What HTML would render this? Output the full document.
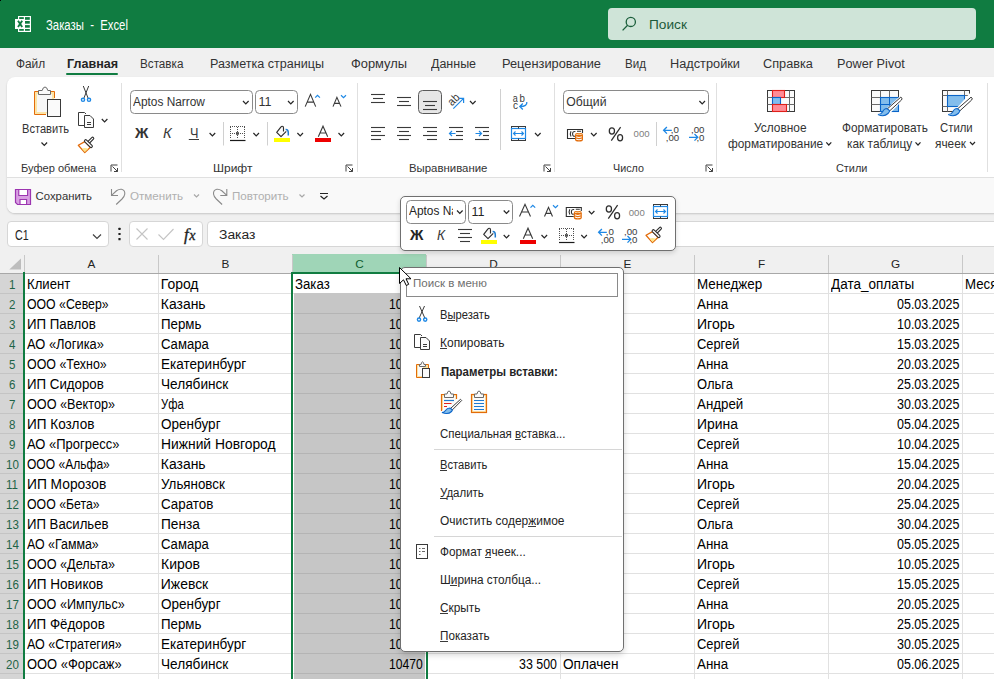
<!DOCTYPE html><html><head><meta charset="utf-8"><style>
*{box-sizing:border-box}
html,body{margin:0;padding:0;width:994px;height:679px;overflow:hidden;background:#f0f0f0;font-family:"Liberation Sans",sans-serif;position:relative}
.t{position:absolute;white-space:pre;line-height:1;transform-origin:0 0}
.a{position:absolute}
svg{position:absolute;overflow:visible}
</style></head><body>
<div class="a" style="left:0;top:0;width:994px;height:48px;background:#107c41"></div><div class="a" style="left:0;top:0;width:1px;height:1px;background:#000"></div><div class="a" style="left:608px;top:8px;width:368px;height:32px;border-radius:4px;background:#cfe4d8"></div><div class="t" style="left:46.00px;top:19px;font-size:13.81px;color:#fff;transform:scaleX(0.821);">Заказы  -  Excel</div>
<div class="t" style="left:649.00px;top:19px;font-size:12.79px;color:#1d5a3a;transform:scaleX(1.069);">Поиск</div>
<div class="t" style="left:15.60px;top:57px;font-size:13.08px;color:#333333;transform:scaleX(0.907);">Файл</div>
<div class="t" style="left:66.60px;top:57px;font-size:13.08px;color:#242424;font-weight:700;transform:scaleX(0.960);">Главная</div>
<div class="t" style="left:139.70px;top:57px;font-size:13.08px;color:#333333;transform:scaleX(0.894);">Вставка</div>
<div class="t" style="left:210.00px;top:57px;font-size:13.08px;color:#333333;transform:scaleX(0.961);">Разметка страницы</div>
<div class="t" style="left:351.00px;top:57px;font-size:13.08px;color:#333333;transform:scaleX(0.984);">Формулы</div>
<div class="t" style="left:431.00px;top:57px;font-size:13.08px;color:#333333;transform:scaleX(0.953);">Данные</div>
<div class="t" style="left:502.00px;top:57px;font-size:13.08px;color:#333333;transform:scaleX(0.980);">Рецензирование</div>
<div class="t" style="left:625.00px;top:57px;font-size:13.08px;color:#333333;transform:scaleX(0.887);">Вид</div>
<div class="t" style="left:670.00px;top:57px;font-size:13.08px;color:#333333;transform:scaleX(0.975);">Надстройки</div>
<div class="t" style="left:763.00px;top:57px;font-size:13.08px;color:#333333;transform:scaleX(0.973);">Справка</div>
<div class="t" style="left:837.00px;top:57px;font-size:13.08px;color:#333333;transform:scaleX(0.973);">Power Pivot</div>
<div class="a" style="left:66px;top:73px;width:52px;height:2px;background:#107c41;border-radius:1px"></div><div class="a" style="left:7px;top:77px;width:995px;height:136px;border-radius:8px;background:#fff;box-shadow:0 1px 2px rgba(0,0,0,.18)"></div><div class="a" style="left:7px;top:177px;width:995px;height:36px;border-radius:0 0 8px 8px;background:#f9f9f9;border-top:1px solid #e0e0e0"></div><svg width="994" height="679" style="left:0;top:0"><rect x="18" y="16" width="13" height="16" fill="#fff"/><g fill="#107c41"><rect x="19.2" y="17.1" width="4.6" height="1.9"/><rect x="25" y="17.1" width="4.8" height="2.7"/><rect x="25" y="21" width="4.8" height="2.7"/><rect x="25" y="25.1" width="4.8" height="2.6"/><rect x="25" y="29" width="4.8" height="1.8"/><rect x="19.2" y="29" width="4.6" height="1.8"/></g><rect x="15" y="19" width="9.7" height="10" fill="#fff"/><path d="M18 20.8L22.2 27M22.2 20.8L18 27" stroke="#107c41" stroke-width="1.9"/><g fill="none" stroke="#1b5e3b" stroke-width="1.3"><circle cx="630.8" cy="21.9" r="4.6"/><path d="M627.6 25.2L622.6 30.4"/></g><path d="M46 114.5H34.5V91.5H54.5V98" fill="#fce4a6" stroke="#e36c0a"/><rect x="37" y="94" width="15" height="18" fill="#f7f7f7"/><path d="M38.5 90.5H42.2Q43 87 45 87Q47 87 47.8 90.5H50.5V94.5H38.5Z" fill="#fafafa" stroke="#6a6a6a"/><rect x="47.5" y="99.5" width="13" height="17" fill="#fafafa" stroke="#3a3a3a"/><path d="M41.5 142.5L44.3 145.4L47.1 142.5" fill="none" stroke="#262626" stroke-width="1.2"/><path d="M83.3 86L88.2 98.4M88.7 86L83.8 98.4" stroke="#3a3a3a" stroke-width="1"/><g fill="#fff" stroke="#1e88e5" stroke-width="1.4"><circle cx="83" cy="99.8" r="1.6"/><circle cx="89" cy="99.8" r="1.6"/></g><path d="M84.5 125.5H78.5V112.5H84.5L86 114" fill="none" stroke="#3a3a3a"/><path d="M84.5 115.5H90L93.5 119V127.5H84.5Z" fill="#fafafa" stroke="#3a3a3a"/><path d="M87 122.5H91M87 124.5H91" stroke="#3a3a3a"/><path d="M101.8 119L104.6 121.9L107.39999999999999 119" fill="none" stroke="#262626" stroke-width="1.2"/><g transform="translate(0 0)"><path d="M84.8 141.6L78.3 145.3L84.8 152.6L90.4 147.2Z" fill="#fff" stroke="#e36c0a" stroke-width="1.3" stroke-linejoin="round"/><path d="M81.8 148.6L84.8 152L88.2 148.8Q85 147.5 81.8 148.6Z" fill="#fde68a"/><path d="M92.6 138.4L88.8 142.2" stroke="#2e2e2e" stroke-width="3.4" stroke-linecap="round"/><path d="M92.6 138.4L88.8 142.2" stroke="#fff" stroke-width="1.2" stroke-linecap="round"/><path d="M85.7 140.9L91.1 146.3" stroke="#2e2e2e" stroke-width="3.6" stroke-linecap="round"/><path d="M85.7 140.9L91.1 146.3" stroke="#fff" stroke-width="1.4" stroke-linecap="round"/></g><path d="M111.0 171.5V165.0H117.5M112.5 166.5L117.5 171.5M117.5 168.0V171.5H114.0" fill="none" stroke="#424242" stroke-width="1"/><path d="M346.0 171.5V165.0H352.5M347.5 166.5L352.5 171.5M352.5 168.0V171.5H349.0" fill="none" stroke="#424242" stroke-width="1"/><path d="M544.0 171.5V165.0H550.5M545.5 166.5L550.5 171.5M550.5 168.0V171.5H547.0" fill="none" stroke="#424242" stroke-width="1"/><path d="M706.0 171.5V165.0H712.5M707.5 166.5L712.5 171.5M712.5 168.0V171.5H709.0" fill="none" stroke="#424242" stroke-width="1"/><path d="M121.5 83V172" stroke="#e0e0e0"/><path d="M357.5 83V172" stroke="#e0e0e0"/><path d="M554.5 83V172" stroke="#e0e0e0"/><path d="M716.5 83V172" stroke="#e0e0e0"/><path d="M987.5 83V172" stroke="#e0e0e0"/><rect x="130.5" y="90.5" width="122" height="23" rx="4" fill="#fff" stroke="#8a8a8a"/><rect x="255.5" y="90.5" width="42" height="23" rx="4" fill="#fff" stroke="#8a8a8a"/><path d="M243 101L245.8 103.9L248.6 101" fill="none" stroke="#262626" stroke-width="1.2"/><path d="M288 101L290.8 103.9L293.6 101" fill="none" stroke="#262626" stroke-width="1.2"/><path d="M305.2 106.6L310.5 94.3L315.7 106.6M307.4 102.1H313.6" fill="none" stroke="#3a3a3a" stroke-width="1.1"/><path d="M315.2 97.7L317.5 95.3L319.9 97.7" fill="none" stroke="#1e88e5" stroke-width="1.2"/><path d="M333 106.6L336.9 97.4L341 106.6M334.6 103.4H339.3" fill="none" stroke="#3a3a3a" stroke-width="1.1"/><path d="M341 95.3L343.5 97.6L346 95.3" fill="none" stroke="#1e88e5" stroke-width="1.2"/><path d="M188.8 139.5H199" stroke="#3a3a3a"/><path d="M209.6 133L212.4 135.9L215.2 133" fill="none" stroke="#262626" stroke-width="1.2"/><path d="M223.5 122V145.5M267.5 122V145.5" stroke="#d0d0d0"/><g transform="translate(0 0)"><g stroke="#505050" stroke-dasharray="1 1" fill="none" shape-rendering="crispEdges"><path d="M230 126.5H246M230 133.5H246M230.5 127V139M237.5 127V139M244.5 127V139"/></g><rect x="236.5" y="132.5" width="2" height="2" fill="none" stroke="#505050" stroke-width=".8"/><path d="M230 140.5H245.5" stroke="#1a1a1a" stroke-width="1.2"/></g><path d="M253.4 133L256.2 135.9L259.0 133" fill="none" stroke="#262626" stroke-width="1.2"/><g transform="translate(0 0)"><path d="M283.5 131.5V127.8Q283.5 126.2 282.3 126.2Q281.5 126.2 280.6 127.3L276.7 132.4L281 136.6L286.3 131.4" fill="#fafafa" stroke="#2e2e2e" stroke-width="1.15" stroke-linejoin="round"/><path d="M285.6 129.5Q288.3 129.3 288.3 133V135.6" fill="none" stroke="#1e7bd0" stroke-width="1.5"/><rect x="274" y="138" width="16" height="4" fill="#ffff00"/></g><path d="M297.4 133L300.2 135.9L303.0 133" fill="none" stroke="#262626" stroke-width="1.2"/><path d="M318.3 136.8L323 126.2L327.7 136.8M320 133H326" fill="none" stroke="#3a3a3a" stroke-width="1.1"/><rect x="315" y="138" width="16" height="4" fill="#ee0000"/><path d="M338.5 133L341.3 135.9L344.1 133" fill="none" stroke="#262626" stroke-width="1.2"/><path d="M371 94.5H385" stroke="#3a3a3a" stroke-width="1.1"/><path d="M373 98.5H383" stroke="#3a3a3a" stroke-width="1.1"/><path d="M371 102.5H385" stroke="#3a3a3a" stroke-width="1.1"/><path d="M397 97.5H411" stroke="#3a3a3a" stroke-width="1.1"/><path d="M399 101.5H409" stroke="#3a3a3a" stroke-width="1.1"/><path d="M397 105.5H411" stroke="#3a3a3a" stroke-width="1.1"/><rect x="418.5" y="90.5" width="23" height="23" rx="4" fill="#e6e6e6" stroke="#5a5a5a"/><path d="M423 101.5H437" stroke="#3a3a3a" stroke-width="1.1"/><path d="M425 105.5H435" stroke="#3a3a3a" stroke-width="1.1"/><path d="M423 109.5H437" stroke="#3a3a3a" stroke-width="1.1"/><path d="M371 127.5H385" stroke="#3a3a3a" stroke-width="1.1"/><path d="M371 131.5H381" stroke="#3a3a3a" stroke-width="1.1"/><path d="M371 135.5H385" stroke="#3a3a3a" stroke-width="1.1"/><path d="M371 139.5H381" stroke="#3a3a3a" stroke-width="1.1"/><path d="M397 127.5H411" stroke="#3a3a3a" stroke-width="1.1"/><path d="M399 131.5H409" stroke="#3a3a3a" stroke-width="1.1"/><path d="M397 135.5H411" stroke="#3a3a3a" stroke-width="1.1"/><path d="M399 139.5H409" stroke="#3a3a3a" stroke-width="1.1"/><path d="M423 127.5H437" stroke="#3a3a3a" stroke-width="1.1"/><path d="M427 131.5H437" stroke="#3a3a3a" stroke-width="1.1"/><path d="M423 135.5H437" stroke="#3a3a3a" stroke-width="1.1"/><path d="M427 139.5H437" stroke="#3a3a3a" stroke-width="1.1"/><path d="M449 127.5H463" stroke="#3a3a3a" stroke-width="1.1"/><path d="M456 131.5H463" stroke="#3a3a3a" stroke-width="1.1"/><path d="M456 135.5H463" stroke="#3a3a3a" stroke-width="1.1"/><path d="M449 139.5H463" stroke="#3a3a3a" stroke-width="1.1"/><path d="M455.5 133.5H449.5M452 131L449.5 133.5L452 136" fill="none" stroke="#1e88e5" stroke-width="1.2"/><path d="M475 127.5H489" stroke="#3a3a3a" stroke-width="1.1"/><path d="M483 131.5H489" stroke="#3a3a3a" stroke-width="1.1"/><path d="M483 135.5H489" stroke="#3a3a3a" stroke-width="1.1"/><path d="M475 139.5H489" stroke="#3a3a3a" stroke-width="1.1"/><path d="M475.5 133.5H481.5M479 131L481.5 133.5L479 136" fill="none" stroke="#1e88e5" stroke-width="1.2"/><text x="0" y="0" transform="translate(452 106.5) rotate(-45)" font-family="Liberation Sans" font-size="11.5" fill="#3a3a3a" textLength="12" lengthAdjust="spacingAndGlyphs">ab</text><path d="M453.3 108.6L463.6 98.3M459 98.3H463.6V103" fill="none" stroke="#1e88e5" stroke-width="1.2"/><path d="M470 101L472.8 103.9L475.6 101" fill="none" stroke="#262626" stroke-width="1.2"/><path d="M500.5 89V150" stroke="#d0d0d0"/><g font-family="Liberation Sans" font-size="11" fill="#3a3a3a"><text x="512.8" y="101.7" textLength="5" lengthAdjust="spacingAndGlyphs">a</text><text x="519.6" y="101.7" textLength="5.4" lengthAdjust="spacingAndGlyphs">b</text><text x="513" y="108.7" textLength="5" lengthAdjust="spacingAndGlyphs">c</text></g><path d="M526.8 102Q527.5 106.5 520 106.5M522.8 103.5L519.8 106.5L522.8 109.5" fill="none" stroke="#1e88e5" stroke-width="1.3"/><rect x="511.5" y="126.5" width="14" height="14" fill="#fff" stroke="#3a3a3a"/><rect x="511.5" y="128.5" width="14" height="10" fill="#fff" stroke="#1e88e5" stroke-width="1.2"/><path d="M518.5 126.5V128.5M518.5 138.5V140.5" stroke="#3a3a3a"/><path d="M513.5 133.5H523.5M515.5 131.5L513.5 133.5L515.5 135.5M521.5 131.5L523.5 133.5L521.5 135.5" fill="none" stroke="#1e88e5" stroke-width="1.1"/><path d="M535 133L537.8 135.9L540.6 133" fill="none" stroke="#262626" stroke-width="1.2"/><rect x="563.5" y="90.5" width="145" height="23" rx="4" fill="#fff" stroke="#8a8a8a"/><path d="M699.4 101L702.1999999999999 103.9L705.0 101" fill="none" stroke="#262626" stroke-width="1.2"/><g transform="translate(0 0)"><path d="M575 138.5H567.5V129.5H582.5V133" fill="none" stroke="#2e2e2e" stroke-width="1.1"/><path d="M571 131.2Q569.6 133.8 571 136.6M575.4 131.5Q572.6 131.2 572.6 133.9Q572.6 136.5 575 136.3M577 131.3H581" fill="none" stroke="#2e2e2e" stroke-width="1.1"/><rect x="575" y="133" width="8" height="8.4" rx="2.2" fill="#e36c0a"/><path d="M576.3 134.6Q579 133.7 581.7 134.6" stroke="#fde0b0" stroke-width="1" fill="none"/><path d="M576.2 136.8Q579 138.2 581.8 136.8M576.2 139.1Q579 140.5 581.8 139.1" fill="none" stroke="#fff" stroke-width="1.1"/></g><path d="M591 133L593.8 135.9L596.6 133" fill="none" stroke="#262626" stroke-width="1.2"/><g transform="translate(0 0)" fill="none" stroke="#2e2e2e" stroke-width="1.25"><ellipse cx="611.9" cy="130.9" rx="2.6" ry="3.1"/><ellipse cx="620.1" cy="137.7" rx="2.5" ry="3.1"/><path d="M620.6 127.2L611.3 140.7"/></g><text x="633.6" y="137" font-family="Liberation Sans" font-size="9" fill="#808080" textLength="16" lengthAdjust="spacingAndGlyphs">000</text><path d="M656.5 122V146" stroke="#d0d0d0"/><path d="M671.8 130.3H663.6M666.9 127L663.6 130.3L666.9 133.6" fill="none" stroke="#1e88e5" stroke-width="1.3"/><g font-family="Liberation Sans" font-size="9.7" fill="#3a3a3a"><text x="670.7" y="132.7">,0</text><text x="665.7" y="141">,00</text><text x="691" y="132.7">,00</text><text x="696.4" y="141">,0</text></g><path d="M689 137.3H697.8M694.5 134L697.8 137.3L694.5 140.6" fill="none" stroke="#1e88e5" stroke-width="1.3"/><g stroke="#3a3a3a" fill="#fafafa"><rect x="767.5" y="90.5" width="27" height="21"/></g><path d="M767.5 97.5H794.5M767.5 104.5H794.5M772.5 90.5V111.5M789.5 90.5V111.5" stroke="#6a6a6a"/><rect x="772.5" y="90.5" width="12" height="7" fill="#ff8c96" stroke="#e0201a" stroke-width="1.1"/><rect x="772.5" y="97.5" width="8" height="7" fill="#80bdef" stroke="#0a64c8" stroke-width="1.1"/><rect x="772.5" y="104.5" width="14" height="7" fill="#ff8c96" stroke="#e0201a" stroke-width="1.1"/><path d="M826.3 142.3L828.8 145.0L831.3 142.3" fill="none" stroke="#262626" stroke-width="1.2"/><rect x="871.5" y="90.5" width="27" height="21" fill="#fafafa" stroke="#3a3a3a"/><path d="M871.5 97.5H898.5M871.5 104.5H898.5M880.5 90.5V111.5M889.5 90.5V111.5" stroke="#6a6a6a"/><rect x="880.5" y="97.5" width="18" height="14" fill="#83bdec" stroke="#0a64c8" stroke-width="1.1"/><path d="M889.5 97.5V111.5M880.5 104.5H898.5" stroke="#0a64c8"/><path d="M900.8 97.2L887.5 109.5L890 111.5L902 99Z" fill="#fff" stroke="#fff" stroke-width="2.5"/><path d="M900.8 97.2Q903 98 901.5 100L889.5 111L887.2 109Z" fill="#fff" stroke="#3a3a3a" stroke-width="1"/><path d="M887 108.5Q884 108.5 882.5 112Q881 114.5 878 114.5Q884 117.5 888 113.5Q890 111.5 889.5 110.5Z" fill="#83bdec" stroke="#0a64c8" stroke-width="1.1"/><path d="M915.5 142.3L918.0 145.0L920.5 142.3" fill="none" stroke="#262626" stroke-width="1.2"/><rect x="942.5" y="90.5" width="27" height="21" fill="#fafafa" stroke="#3a3a3a"/><path d="M942.5 95.5H969.5M942.5 106.5H969.5M947.5 90.5V111.5M964.5 90.5V111.5" stroke="#6a6a6a"/><rect x="947.5" y="95.5" width="17" height="11" fill="#83bdec" stroke="#0a64c8" stroke-width="1.1"/><path d="M970 93L976 93L976 118L951.5 118L951.5 113L960 104.5Z" fill="#fff"/><path d="M971 97.2L957.5 109.5L960 111.5L972.2 99Z" fill="#fff" stroke="#fff" stroke-width="2.5"/><path d="M971 97.2Q973.2 98 971.7 100L959.7 111L957.4 109Z" fill="#fff" stroke="#3a3a3a" stroke-width="1"/><path d="M957.2 108.5Q954.2 108.5 952.7 112Q951.2 114.5 948.2 114.5Q954.2 117.5 958.2 113.5Q960.2 111.5 959.7 110.5Z" fill="#83bdec" stroke="#0a64c8" stroke-width="1.1"/><path d="M970 142L972.5 144.7L975 142" fill="none" stroke="#262626" stroke-width="1.2"/><path d="M15.5 189.5H30.5V204.5H17.5L15.5 202.5Z" fill="#d89fe2" stroke="#9c35b0" stroke-width="1.2"/><rect x="19" y="190" width="8.4" height="5.2" fill="#fff"/><path d="M18.8 190V195.5H27.6V190" fill="none" stroke="#9c35b0" stroke-width="1.1"/><rect x="20.2" y="200" width="6.2" height="4" fill="#fff"/><path d="M20 204.5V199.5H26.6V204.5" fill="none" stroke="#9c35b0" stroke-width="1.1"/><path d="M111.5 189V195.5H118M111.8 195.2L116.5 190.8Q119 189 121.5 189.3Q125 190 124.8 194Q124.5 196.5 122 199L116.2 204.5" fill="none" stroke="#8a8a8a" stroke-width="1.1"/><path d="M194 194.5L196.5 197.0L199 194.5" fill="none" stroke="#a8a8a8" stroke-width="1.2"/><g transform="translate(338.3 0) scale(-1 1)"><path d="M111.5 189V195.5H118M111.8 195.2L116.5 190.8Q119 189 121.5 189.3Q125 190 124.8 194Q124.5 196.5 122 199L116.2 204.5" fill="none" stroke="#8a8a8a" stroke-width="1.1"/></g><path d="M299.5 194.5L302.0 197.0L304.5 194.5" fill="none" stroke="#a8a8a8" stroke-width="1.2"/><path d="M320 193.5H328M320.5 196L324 199L327.5 196" fill="none" stroke="#242424" stroke-width="1.2"/></svg>
<div class="t" style="left:21.50px;top:123px;font-size:12.21px;color:#333333;transform:scaleX(0.910);">Вставить</div>
<div class="t" style="left:20.60px;top:163px;font-size:11.34px;color:#333333;transform:scaleX(0.978);">Буфер обмена</div>
<div class="t" style="left:133.30px;top:96px;font-size:12.50px;color:#333333;transform:scaleX(0.950);">Aptos Narrow</div>
<div class="t" style="left:258.60px;top:96px;font-size:12.50px;color:#333333;">11</div>
<div class="t" style="left:135.15px;top:127px;font-size:13.81px;color:#333333;font-weight:700;transform:scaleX(1.071);">Ж</div>
<div class="t" style="left:162.80px;top:127px;font-size:13.81px;color:#3a3a3a;font-style:italic;transform:scaleX(1.075);">К</div>
<div class="t" style="left:189.50px;top:127px;font-size:13.81px;color:#3a3a3a;transform:scaleX(0.919);">Ч</div>
<div class="t" style="left:213.00px;top:163px;font-size:11.34px;color:#333333;transform:scaleX(1.059);">Шрифт</div>
<div class="t" style="left:408.60px;top:163px;font-size:11.34px;color:#333333;transform:scaleX(1.005);">Выравнивание</div>
<div class="t" style="left:566.30px;top:96px;font-size:12.21px;color:#333333;">Общий</div>
<div class="t" style="left:612.70px;top:163px;font-size:11.34px;color:#333333;transform:scaleX(0.949);">Число</div>
<div class="t" style="left:754.40px;top:122px;font-size:12.35px;color:#333333;transform:scaleX(0.964);">Условное</div>
<div class="t" style="left:727.80px;top:138px;font-size:12.35px;color:#333333;transform:scaleX(0.960);">форматирование</div>
<div class="t" style="left:841.60px;top:122px;font-size:12.35px;color:#333333;transform:scaleX(0.958);">Форматировать</div>
<div class="t" style="left:846.70px;top:138px;font-size:12.35px;color:#333333;transform:scaleX(0.964);">как таблицу</div>
<div class="t" style="left:939.70px;top:123px;font-size:11.92px;color:#333333;transform:scaleX(0.953);">Стили</div>
<div class="t" style="left:935.00px;top:138px;font-size:12.50px;color:#333333;transform:scaleX(0.947);">ячеек</div>
<div class="t" style="left:836.30px;top:163px;font-size:11.34px;color:#333333;transform:scaleX(0.962);">Стили</div>
<div class="t" style="left:35.60px;top:191px;font-size:11.34px;color:#333333;">Сохранить</div>
<div class="t" style="left:130.20px;top:191px;font-size:11.34px;color:#b0b0b0;transform:scaleX(1.025);">Отменить</div>
<div class="t" style="left:231.60px;top:191px;font-size:11.34px;color:#b0b0b0;transform:scaleX(1.025);">Повторить</div>
<div class="a" style="left:7px;top:221px;width:102px;height:26px;border-radius:4px;background:#fff;border:1px solid #d6d6d6"></div><div class="a" style="left:129px;top:221px;width:74px;height:26px;border-radius:4px;background:#fff;border:1px solid #d6d6d6"></div><div class="a" style="left:207px;top:221px;width:800px;height:26px;border-radius:4px;background:#fff;border:1px solid #d6d6d6"></div><div class="t" style="left:14.60px;top:228px;font-size:14.53px;color:#242424;transform:scaleX(0.736);">C1</div>
<div class="t" style="left:218.60px;top:228px;font-size:13.52px;color:#242424;transform:scaleX(1.028);">Заказ</div>
<div class="a" style="left:0;top:247px;width:994px;height:432px;background:#fff"></div><div class="a" style="left:0;top:247px;width:994px;height:26px;background:#f0f0f0"></div><div class="a" style="left:292px;top:254px;width:134px;height:19px;background:#9fd5b7"></div><div class="a" style="left:0;top:273px;width:24px;height:406px;background:#d5d5d5"></div><svg width="994" height="679" style="left:0;top:0"><path d="M0 273.5H994" stroke="#a8a8a8" stroke-width="1.2"/><path d="M158.5 255V273" stroke="#c8c8c8"/><path d="M292.5 255V273" stroke="#c8c8c8"/><path d="M426.5 255V273" stroke="#c8c8c8"/><path d="M560.5 255V273" stroke="#c8c8c8"/><path d="M694.5 255V273" stroke="#c8c8c8"/><path d="M828.5 255V273" stroke="#c8c8c8"/><path d="M962.5 255V273" stroke="#c8c8c8"/><path d="M24.5 255V273" stroke="#c8c8c8"/><path d="M9.3 269.6H21V258.5Z" fill="#bdbdbd"/><path d="M0 293.5H24" stroke="#c4c4c4"/><path d="M24 293.5H994" stroke="#e1e1e1"/><path d="M0 313.5H24" stroke="#c4c4c4"/><path d="M24 313.5H994" stroke="#e1e1e1"/><path d="M0 333.5H24" stroke="#c4c4c4"/><path d="M24 333.5H994" stroke="#e1e1e1"/><path d="M0 353.5H24" stroke="#c4c4c4"/><path d="M24 353.5H994" stroke="#e1e1e1"/><path d="M0 373.5H24" stroke="#c4c4c4"/><path d="M24 373.5H994" stroke="#e1e1e1"/><path d="M0 393.5H24" stroke="#c4c4c4"/><path d="M24 393.5H994" stroke="#e1e1e1"/><path d="M0 413.5H24" stroke="#c4c4c4"/><path d="M24 413.5H994" stroke="#e1e1e1"/><path d="M0 433.5H24" stroke="#c4c4c4"/><path d="M24 433.5H994" stroke="#e1e1e1"/><path d="M0 453.5H24" stroke="#c4c4c4"/><path d="M24 453.5H994" stroke="#e1e1e1"/><path d="M0 473.5H24" stroke="#c4c4c4"/><path d="M24 473.5H994" stroke="#e1e1e1"/><path d="M0 493.5H24" stroke="#c4c4c4"/><path d="M24 493.5H994" stroke="#e1e1e1"/><path d="M0 513.5H24" stroke="#c4c4c4"/><path d="M24 513.5H994" stroke="#e1e1e1"/><path d="M0 533.5H24" stroke="#c4c4c4"/><path d="M24 533.5H994" stroke="#e1e1e1"/><path d="M0 553.5H24" stroke="#c4c4c4"/><path d="M24 553.5H994" stroke="#e1e1e1"/><path d="M0 573.5H24" stroke="#c4c4c4"/><path d="M24 573.5H994" stroke="#e1e1e1"/><path d="M0 593.5H24" stroke="#c4c4c4"/><path d="M24 593.5H994" stroke="#e1e1e1"/><path d="M0 613.5H24" stroke="#c4c4c4"/><path d="M24 613.5H994" stroke="#e1e1e1"/><path d="M0 633.5H24" stroke="#c4c4c4"/><path d="M24 633.5H994" stroke="#e1e1e1"/><path d="M0 653.5H24" stroke="#c4c4c4"/><path d="M24 653.5H994" stroke="#e1e1e1"/><path d="M0 673.5H24" stroke="#c4c4c4"/><path d="M24 673.5H994" stroke="#e1e1e1"/><path d="M158.5 274V679" stroke="#e1e1e1"/><path d="M292.5 274V679" stroke="#e1e1e1"/><path d="M426.5 274V679" stroke="#e1e1e1"/><path d="M560.5 274V679" stroke="#e1e1e1"/><path d="M694.5 274V679" stroke="#e1e1e1"/><path d="M828.5 274V679" stroke="#e1e1e1"/><path d="M962.5 274V679" stroke="#e1e1e1"/></svg>
<div class="a" style="left:294px;top:293px;width:131px;height:386px;background:#c6c6c6"></div><svg width="994" height="679" style="left:0;top:0"><path d="M294 313.5H425" stroke="#b4b4b4"/><path d="M294 333.5H425" stroke="#b4b4b4"/><path d="M294 353.5H425" stroke="#b4b4b4"/><path d="M294 373.5H425" stroke="#b4b4b4"/><path d="M294 393.5H425" stroke="#b4b4b4"/><path d="M294 413.5H425" stroke="#b4b4b4"/><path d="M294 433.5H425" stroke="#b4b4b4"/><path d="M294 453.5H425" stroke="#b4b4b4"/><path d="M294 473.5H425" stroke="#b4b4b4"/><path d="M294 493.5H425" stroke="#b4b4b4"/><path d="M294 513.5H425" stroke="#b4b4b4"/><path d="M294 533.5H425" stroke="#b4b4b4"/><path d="M294 553.5H425" stroke="#b4b4b4"/><path d="M294 573.5H425" stroke="#b4b4b4"/><path d="M294 593.5H425" stroke="#b4b4b4"/><path d="M294 613.5H425" stroke="#b4b4b4"/><path d="M294 633.5H425" stroke="#b4b4b4"/><path d="M294 653.5H425" stroke="#b4b4b4"/><path d="M294 673.5H425" stroke="#b4b4b4"/><path d="M23 272V679" stroke="#107c41" stroke-width="2" transform="translate(1 0)"/><path d="M292 273H427V679M292 272V679" fill="none" stroke="#107c41" stroke-width="2"/></svg>
<div class="t" style="left:87.56px;top:258px;font-size:11.77px;color:#242424;">A</div>
<div class="t" style="left:221.56px;top:258px;font-size:11.77px;color:#242424;">B</div>
<div class="t" style="left:355.26px;top:258px;font-size:11.77px;color:#0e5c2f;">C</div>
<div class="t" style="left:489.26px;top:258px;font-size:11.77px;color:#242424;">D</div>
<div class="t" style="left:623.56px;top:258px;font-size:11.77px;color:#242424;">E</div>
<div class="t" style="left:757.91px;top:258px;font-size:11.77px;color:#242424;">F</div>
<div class="t" style="left:890.91px;top:258px;font-size:11.77px;color:#242424;">G</div>
<div class="t" style="left:1025.26px;top:258px;font-size:11.77px;color:#242424;">H</div>
<div class="t" style="left:9.27px;top:279px;font-size:12.84px;color:#1e6447;transform:scaleX(0.900);">1</div>
<div class="t" style="left:26.90px;top:278px;font-size:13.95px;color:#000;transform:scaleX(0.943);">Клиент</div>
<div class="t" style="left:160.80px;top:278px;font-size:13.95px;color:#000;">Город</div>
<div class="t" style="left:696.90px;top:278px;font-size:13.95px;color:#000;transform:scaleX(0.963);">Менеджер</div>
<div class="t" style="left:294.80px;top:278px;font-size:13.95px;color:#000;transform:scaleX(0.950);">Заказ</div>
<div class="t" style="left:830.60px;top:278px;font-size:13.95px;color:#000;transform:scaleX(0.970);">Дата_оплаты</div>
<div class="t" style="left:964.80px;top:278px;font-size:13.95px;color:#000;transform:scaleX(0.950);">Меся</div>
<div class="t" style="left:9.27px;top:299px;font-size:12.84px;color:#1e6447;transform:scaleX(0.900);">2</div>
<div class="t" style="left:26.90px;top:298px;font-size:13.95px;color:#000;transform:scaleX(0.882);">ООО «Север»</div>
<div class="t" style="left:160.80px;top:298px;font-size:13.95px;color:#000;">Казань</div>
<div class="t" style="left:696.90px;top:298px;font-size:13.95px;color:#000;transform:scaleX(0.960);">Анна</div>
<div class="t" style="left:389.45px;top:298px;font-size:13.95px;color:#000;transform:scaleX(0.870);">10452</div>
<div class="t" style="left:896.79px;top:298px;font-size:13.95px;color:#000;transform:scaleX(0.896);">05.03.2025</div>
<div class="t" style="left:9.27px;top:319px;font-size:12.84px;color:#1e6447;transform:scaleX(0.900);">3</div>
<div class="t" style="left:26.90px;top:318px;font-size:13.95px;color:#000;transform:scaleX(0.953);">ИП Павлов</div>
<div class="t" style="left:160.80px;top:318px;font-size:13.95px;color:#000;transform:scaleX(0.955);">Пермь</div>
<div class="t" style="left:696.90px;top:318px;font-size:13.95px;color:#000;transform:scaleX(1.007);">Игорь</div>
<div class="t" style="left:389.45px;top:318px;font-size:13.95px;color:#000;transform:scaleX(0.870);">10453</div>
<div class="t" style="left:896.79px;top:318px;font-size:13.95px;color:#000;transform:scaleX(0.896);">10.03.2025</div>
<div class="t" style="left:9.27px;top:339px;font-size:12.84px;color:#1e6447;transform:scaleX(0.900);">4</div>
<div class="t" style="left:26.90px;top:338px;font-size:13.95px;color:#000;transform:scaleX(0.925);">АО «Логика»</div>
<div class="t" style="left:160.80px;top:338px;font-size:13.95px;color:#000;transform:scaleX(0.941);">Самара</div>
<div class="t" style="left:696.90px;top:338px;font-size:13.95px;color:#000;transform:scaleX(0.924);">Сергей</div>
<div class="t" style="left:389.45px;top:338px;font-size:13.95px;color:#000;transform:scaleX(0.870);">10454</div>
<div class="t" style="left:896.79px;top:338px;font-size:13.95px;color:#000;transform:scaleX(0.896);">15.03.2025</div>
<div class="t" style="left:9.27px;top:359px;font-size:12.84px;color:#1e6447;transform:scaleX(0.900);">5</div>
<div class="t" style="left:26.90px;top:358px;font-size:13.95px;color:#000;transform:scaleX(0.891);">ООО «Техно»</div>
<div class="t" style="left:160.80px;top:358px;font-size:13.95px;color:#000;transform:scaleX(0.971);">Екатеринбург</div>
<div class="t" style="left:696.90px;top:358px;font-size:13.95px;color:#000;transform:scaleX(0.960);">Анна</div>
<div class="t" style="left:389.45px;top:358px;font-size:13.95px;color:#000;transform:scaleX(0.870);">10455</div>
<div class="t" style="left:896.79px;top:358px;font-size:13.95px;color:#000;transform:scaleX(0.896);">20.03.2025</div>
<div class="t" style="left:9.27px;top:379px;font-size:12.84px;color:#1e6447;transform:scaleX(0.900);">6</div>
<div class="t" style="left:26.90px;top:378px;font-size:13.95px;color:#000;transform:scaleX(0.953);">ИП Сидоров</div>
<div class="t" style="left:160.80px;top:378px;font-size:13.95px;color:#000;transform:scaleX(0.979);">Челябинск</div>
<div class="t" style="left:696.90px;top:378px;font-size:13.95px;color:#000;transform:scaleX(0.931);">Ольга</div>
<div class="t" style="left:389.45px;top:378px;font-size:13.95px;color:#000;transform:scaleX(0.870);">10456</div>
<div class="t" style="left:896.79px;top:378px;font-size:13.95px;color:#000;transform:scaleX(0.896);">25.03.2025</div>
<div class="t" style="left:9.27px;top:399px;font-size:12.84px;color:#1e6447;transform:scaleX(0.900);">7</div>
<div class="t" style="left:26.90px;top:398px;font-size:13.95px;color:#000;transform:scaleX(0.908);">ООО «Вектор»</div>
<div class="t" style="left:160.80px;top:398px;font-size:13.95px;color:#000;transform:scaleX(0.809);">Уфа</div>
<div class="t" style="left:696.90px;top:398px;font-size:13.95px;color:#000;transform:scaleX(0.956);">Андрей</div>
<div class="t" style="left:389.45px;top:398px;font-size:13.95px;color:#000;transform:scaleX(0.870);">10457</div>
<div class="t" style="left:896.79px;top:398px;font-size:13.95px;color:#000;transform:scaleX(0.896);">30.03.2025</div>
<div class="t" style="left:9.27px;top:419px;font-size:12.84px;color:#1e6447;transform:scaleX(0.900);">8</div>
<div class="t" style="left:26.90px;top:418px;font-size:13.95px;color:#000;transform:scaleX(0.973);">ИП Козлов</div>
<div class="t" style="left:160.80px;top:418px;font-size:13.95px;color:#000;transform:scaleX(0.971);">Оренбург</div>
<div class="t" style="left:696.90px;top:418px;font-size:13.95px;color:#000;">Ирина</div>
<div class="t" style="left:389.45px;top:418px;font-size:13.95px;color:#000;transform:scaleX(0.870);">10458</div>
<div class="t" style="left:896.79px;top:418px;font-size:13.95px;color:#000;transform:scaleX(0.896);">05.04.2025</div>
<div class="t" style="left:9.27px;top:439px;font-size:12.84px;color:#1e6447;transform:scaleX(0.900);">9</div>
<div class="t" style="left:26.90px;top:438px;font-size:13.95px;color:#000;transform:scaleX(0.931);">АО «Прогресс»</div>
<div class="t" style="left:160.80px;top:438px;font-size:13.95px;color:#000;transform:scaleX(0.993);">Нижний Новгород</div>
<div class="t" style="left:696.90px;top:438px;font-size:13.95px;color:#000;transform:scaleX(0.924);">Сергей</div>
<div class="t" style="left:389.45px;top:438px;font-size:13.95px;color:#000;transform:scaleX(0.870);">10459</div>
<div class="t" style="left:896.79px;top:438px;font-size:13.95px;color:#000;transform:scaleX(0.896);">10.04.2025</div>
<div class="t" style="left:6.09px;top:459px;font-size:12.84px;color:#1e6447;transform:scaleX(0.900);">10</div>
<div class="t" style="left:26.90px;top:458px;font-size:13.95px;color:#000;transform:scaleX(0.864);">ООО «Альфа»</div>
<div class="t" style="left:160.80px;top:458px;font-size:13.95px;color:#000;">Казань</div>
<div class="t" style="left:696.90px;top:458px;font-size:13.95px;color:#000;transform:scaleX(0.960);">Анна</div>
<div class="t" style="left:389.45px;top:458px;font-size:13.95px;color:#000;transform:scaleX(0.870);">10460</div>
<div class="t" style="left:896.79px;top:458px;font-size:13.95px;color:#000;transform:scaleX(0.896);">15.04.2025</div>
<div class="t" style="left:6.49px;top:479px;font-size:12.84px;color:#1e6447;transform:scaleX(0.900);">11</div>
<div class="t" style="left:26.90px;top:478px;font-size:13.95px;color:#000;transform:scaleX(0.988);">ИП Морозов</div>
<div class="t" style="left:160.80px;top:478px;font-size:13.95px;color:#000;transform:scaleX(0.958);">Ульяновск</div>
<div class="t" style="left:696.90px;top:478px;font-size:13.95px;color:#000;transform:scaleX(1.007);">Игорь</div>
<div class="t" style="left:389.45px;top:478px;font-size:13.95px;color:#000;transform:scaleX(0.870);">10461</div>
<div class="t" style="left:896.79px;top:478px;font-size:13.95px;color:#000;transform:scaleX(0.896);">20.04.2025</div>
<div class="t" style="left:6.09px;top:499px;font-size:12.84px;color:#1e6447;transform:scaleX(0.900);">12</div>
<div class="t" style="left:26.90px;top:498px;font-size:13.95px;color:#000;transform:scaleX(0.883);">ООО «Бета»</div>
<div class="t" style="left:160.80px;top:498px;font-size:13.95px;color:#000;transform:scaleX(0.959);">Саратов</div>
<div class="t" style="left:696.90px;top:498px;font-size:13.95px;color:#000;transform:scaleX(0.924);">Сергей</div>
<div class="t" style="left:389.45px;top:498px;font-size:13.95px;color:#000;transform:scaleX(0.870);">10462</div>
<div class="t" style="left:896.79px;top:498px;font-size:13.95px;color:#000;transform:scaleX(0.896);">25.04.2025</div>
<div class="t" style="left:6.09px;top:519px;font-size:12.84px;color:#1e6447;transform:scaleX(0.900);">13</div>
<div class="t" style="left:26.90px;top:518px;font-size:13.95px;color:#000;transform:scaleX(0.945);">ИП Васильев</div>
<div class="t" style="left:160.80px;top:518px;font-size:13.95px;color:#000;transform:scaleX(0.981);">Пенза</div>
<div class="t" style="left:696.90px;top:518px;font-size:13.95px;color:#000;transform:scaleX(0.931);">Ольга</div>
<div class="t" style="left:389.45px;top:518px;font-size:13.95px;color:#000;transform:scaleX(0.870);">10463</div>
<div class="t" style="left:896.79px;top:518px;font-size:13.95px;color:#000;transform:scaleX(0.896);">30.04.2025</div>
<div class="t" style="left:6.09px;top:539px;font-size:12.84px;color:#1e6447;transform:scaleX(0.900);">14</div>
<div class="t" style="left:26.90px;top:538px;font-size:13.95px;color:#000;transform:scaleX(0.890);">АО «Гамма»</div>
<div class="t" style="left:160.80px;top:538px;font-size:13.95px;color:#000;transform:scaleX(0.941);">Самара</div>
<div class="t" style="left:696.90px;top:538px;font-size:13.95px;color:#000;transform:scaleX(0.960);">Анна</div>
<div class="t" style="left:389.45px;top:538px;font-size:13.95px;color:#000;transform:scaleX(0.870);">10464</div>
<div class="t" style="left:896.79px;top:538px;font-size:13.95px;color:#000;transform:scaleX(0.896);">05.05.2025</div>
<div class="t" style="left:6.09px;top:559px;font-size:12.84px;color:#1e6447;transform:scaleX(0.900);">15</div>
<div class="t" style="left:26.90px;top:558px;font-size:13.95px;color:#000;transform:scaleX(0.908);">ООО «Дельта»</div>
<div class="t" style="left:160.80px;top:558px;font-size:13.95px;color:#000;transform:scaleX(1.005);">Киров</div>
<div class="t" style="left:696.90px;top:558px;font-size:13.95px;color:#000;transform:scaleX(1.007);">Игорь</div>
<div class="t" style="left:389.45px;top:558px;font-size:13.95px;color:#000;transform:scaleX(0.870);">10465</div>
<div class="t" style="left:896.79px;top:558px;font-size:13.95px;color:#000;transform:scaleX(0.896);">10.05.2025</div>
<div class="t" style="left:6.09px;top:579px;font-size:12.84px;color:#1e6447;transform:scaleX(0.900);">16</div>
<div class="t" style="left:26.90px;top:578px;font-size:13.95px;color:#000;transform:scaleX(0.973);">ИП Новиков</div>
<div class="t" style="left:160.80px;top:578px;font-size:13.95px;color:#000;">Ижевск</div>
<div class="t" style="left:696.90px;top:578px;font-size:13.95px;color:#000;transform:scaleX(0.924);">Сергей</div>
<div class="t" style="left:389.45px;top:578px;font-size:13.95px;color:#000;transform:scaleX(0.870);">10466</div>
<div class="t" style="left:896.79px;top:578px;font-size:13.95px;color:#000;transform:scaleX(0.896);">15.05.2025</div>
<div class="t" style="left:6.09px;top:599px;font-size:12.84px;color:#1e6447;transform:scaleX(0.900);">17</div>
<div class="t" style="left:26.90px;top:598px;font-size:13.95px;color:#000;transform:scaleX(0.904);">ООО «Импульс»</div>
<div class="t" style="left:160.80px;top:598px;font-size:13.95px;color:#000;transform:scaleX(0.971);">Оренбург</div>
<div class="t" style="left:696.90px;top:598px;font-size:13.95px;color:#000;transform:scaleX(0.960);">Анна</div>
<div class="t" style="left:389.45px;top:598px;font-size:13.95px;color:#000;transform:scaleX(0.870);">10467</div>
<div class="t" style="left:896.79px;top:598px;font-size:13.95px;color:#000;transform:scaleX(0.896);">20.05.2025</div>
<div class="t" style="left:6.09px;top:619px;font-size:12.84px;color:#1e6447;transform:scaleX(0.900);">18</div>
<div class="t" style="left:26.90px;top:618px;font-size:13.95px;color:#000;transform:scaleX(0.960);">ИП Фёдоров</div>
<div class="t" style="left:160.80px;top:618px;font-size:13.95px;color:#000;transform:scaleX(0.955);">Пермь</div>
<div class="t" style="left:696.90px;top:618px;font-size:13.95px;color:#000;transform:scaleX(1.007);">Игорь</div>
<div class="t" style="left:389.45px;top:618px;font-size:13.95px;color:#000;transform:scaleX(0.870);">10468</div>
<div class="t" style="left:896.79px;top:618px;font-size:13.95px;color:#000;transform:scaleX(0.896);">25.05.2025</div>
<div class="t" style="left:6.09px;top:639px;font-size:12.84px;color:#1e6447;transform:scaleX(0.900);">19</div>
<div class="t" style="left:26.90px;top:638px;font-size:13.95px;color:#000;transform:scaleX(0.900);">АО «Стратегия»</div>
<div class="t" style="left:160.80px;top:638px;font-size:13.95px;color:#000;transform:scaleX(0.971);">Екатеринбург</div>
<div class="t" style="left:696.90px;top:638px;font-size:13.95px;color:#000;transform:scaleX(0.924);">Сергей</div>
<div class="t" style="left:389.45px;top:638px;font-size:13.95px;color:#000;transform:scaleX(0.870);">10469</div>
<div class="t" style="left:896.79px;top:638px;font-size:13.95px;color:#000;transform:scaleX(0.896);">30.05.2025</div>
<div class="t" style="left:6.09px;top:659px;font-size:12.84px;color:#1e6447;transform:scaleX(0.900);">20</div>
<div class="t" style="left:26.90px;top:658px;font-size:13.95px;color:#000;transform:scaleX(0.928);">ООО «Форсаж»</div>
<div class="t" style="left:160.80px;top:658px;font-size:13.95px;color:#000;transform:scaleX(0.979);">Челябинск</div>
<div class="t" style="left:696.90px;top:658px;font-size:13.95px;color:#000;transform:scaleX(0.960);">Анна</div>
<div class="t" style="left:389.45px;top:658px;font-size:13.95px;color:#000;transform:scaleX(0.870);">10470</div>
<div class="t" style="left:896.79px;top:658px;font-size:13.95px;color:#000;transform:scaleX(0.896);">05.06.2025</div>
<div class="t" style="left:519.40px;top:658px;font-size:13.95px;color:#000;transform:scaleX(0.890);">33 500</div>
<div class="t" style="left:562.60px;top:658px;font-size:13.95px;color:#000;transform:scaleX(0.979);">Оплачен</div>
<svg width="994" height="679" style="left:0;top:0"><path d="M93 234.5L97.0 238.5L101 234.5" fill="none" stroke="#424242" stroke-width="1.2"/><g fill="#1e1e1e"><rect x="118.4" y="227.8" width="2.2" height="2.2" rx=".5"/><rect x="118.4" y="232.9" width="2.2" height="2.2" rx=".5"/><rect x="118.4" y="238" width="2.2" height="2.2" rx=".5"/></g><path d="M136.5 228.5L147.5 239.5M147.5 228.5L136.5 239.5" stroke="#c4c4c4" stroke-width="1.1"/><path d="M158.5 234.5L163.5 239.5L173.5 229" fill="none" stroke="#c4c4c4" stroke-width="1.1"/><g font-family="Liberation Serif" font-style="italic" fill="#1e1e1e" stroke="#1e1e1e" stroke-width="0.35"><text x="184" y="239.5" font-size="17">f</text><text x="189.3" y="239.5" font-size="14">x</text></g></svg>
<div class="a" style="left:400px;top:196px;width:276px;height:55px;border-radius:5px;background:#fff;border:1px solid #707070;box-shadow:0 2px 5px rgba(0,0,0,.15)"></div><svg width="994" height="679" style="left:0;top:0"><rect x="406.5" y="200.5" width="59" height="23" rx="4" fill="#fff" stroke="#8a8a8a"/><rect x="468.5" y="200.5" width="44" height="23" rx="4" fill="#fff" stroke="#8a8a8a"/><path d="M457 210.5L459.8 213.4L462.6 210.5" fill="none" stroke="#262626" stroke-width="1.2"/><path d="M503.7 210.5L506.5 213.4L509.3 210.5" fill="none" stroke="#262626" stroke-width="1.2"/><path d="M519.5 216.5L525 204.3L530.5 216.5M521.8 212H528.2" fill="none" stroke="#3a3a3a" stroke-width="1.1"/><path d="M530.5 207.7L532.8 205.3L535.2 207.7" fill="none" stroke="#1e88e5" stroke-width="1.2"/><path d="M544.5 216.5L548.5 207.4L552.5 216.5M546.1 213.4H550.9" fill="none" stroke="#3a3a3a" stroke-width="1.1"/><path d="M553 205.3L555.5 207.6L558 205.3" fill="none" stroke="#1e88e5" stroke-width="1.2"/><g transform="translate(-1.2 78)"><path d="M575 138.5H567.5V129.5H582.5V133" fill="none" stroke="#2e2e2e" stroke-width="1.1"/><path d="M571 131.2Q569.6 133.8 571 136.6M575.4 131.5Q572.6 131.2 572.6 133.9Q572.6 136.5 575 136.3M577 131.3H581" fill="none" stroke="#2e2e2e" stroke-width="1.1"/><rect x="575" y="133" width="8" height="8.4" rx="2.2" fill="#e36c0a"/><path d="M576.3 134.6Q579 133.7 581.7 134.6" stroke="#fde0b0" stroke-width="1" fill="none"/><path d="M576.2 136.8Q579 138.2 581.8 136.8M576.2 139.1Q579 140.5 581.8 139.1" fill="none" stroke="#fff" stroke-width="1.1"/></g><path d="M588.8 211L591.5999999999999 213.9L594.4 211" fill="none" stroke="#262626" stroke-width="1.2"/><g transform="translate(-3 78)" fill="none" stroke="#2e2e2e" stroke-width="1.25"><ellipse cx="611.9" cy="130.9" rx="2.6" ry="3.1"/><ellipse cx="620.1" cy="137.7" rx="2.5" ry="3.1"/><path d="M620.6 127.2L611.3 140.7"/></g><text x="628.8" y="215.5" font-family="Liberation Sans" font-size="9" fill="#808080" textLength="16" lengthAdjust="spacingAndGlyphs">000</text><rect x="653.5" y="204.5" width="14" height="14" fill="#fff" stroke="#3a3a3a"/><rect x="653.5" y="206.5" width="14" height="10" fill="#fff" stroke="#1e88e5" stroke-width="1.2"/><path d="M660.5 204.5V206.5M660.5 216.5V218.5" stroke="#3a3a3a"/><path d="M655.5 211.5H665.5M657.5 209.5L655.5 211.5L657.5 213.5M663.5 209.5L665.5 211.5L663.5 213.5" fill="none" stroke="#1e88e5" stroke-width="1.1"/><path d="M442.5 229.5L437.5 241.5" stroke="none"/><path d="M458 229.5H472" stroke="#3a3a3a" stroke-width="1.1"/><path d="M460 233.5H470" stroke="#3a3a3a" stroke-width="1.1"/><path d="M458 237.5H472" stroke="#3a3a3a" stroke-width="1.1"/><path d="M460 241.5H470" stroke="#3a3a3a" stroke-width="1.1"/><g transform="translate(207 102)"><path d="M283.5 131.5V127.8Q283.5 126.2 282.3 126.2Q281.5 126.2 280.6 127.3L276.7 132.4L281 136.6L286.3 131.4" fill="#fafafa" stroke="#2e2e2e" stroke-width="1.15" stroke-linejoin="round"/><path d="M285.6 129.5Q288.3 129.3 288.3 133V135.6" fill="none" stroke="#1e7bd0" stroke-width="1.5"/><rect x="274" y="138" width="16" height="4" fill="#ffff00"/></g><path d="M503.7 235L506.5 237.9L509.3 235" fill="none" stroke="#262626" stroke-width="1.2"/><path d="M523.3 238.8L528 228.2L532.7 238.8M525 235H531" fill="none" stroke="#3a3a3a" stroke-width="1.1"/><rect x="520" y="240" width="16" height="4" fill="#ee0000"/><path d="M541.5 235L544.3 237.9L547.1 235" fill="none" stroke="#262626" stroke-width="1.2"/><g transform="translate(329 102)"><g stroke="#505050" stroke-dasharray="1 1" fill="none" shape-rendering="crispEdges"><path d="M230 126.5H246M230 133.5H246M230.5 127V139M237.5 127V139M244.5 127V139"/></g><rect x="236.5" y="132.5" width="2" height="2" fill="none" stroke="#505050" stroke-width=".8"/><path d="M230 140.5H245.5" stroke="#1a1a1a" stroke-width="1.2"/></g><path d="M581.3 235L584.0999999999999 237.9L586.9 235" fill="none" stroke="#262626" stroke-width="1.2"/><path d="M606.8 232.3H598.6M601.9 229L598.6 232.3L601.9 235.6" fill="none" stroke="#1e88e5" stroke-width="1.3"/><g font-family="Liberation Sans" font-size="9.7" fill="#3a3a3a"><text x="605.7" y="234.7">,0</text><text x="600.7" y="243">,00</text><text x="624" y="234.7">,00</text><text x="629.4" y="243">,0</text></g><path d="M622 239.3H630.8M627.5 236L630.8 239.3L627.5 242.6" fill="none" stroke="#1e88e5" stroke-width="1.3"/><g transform="translate(567.7 90)"><path d="M84.8 141.6L78.3 145.3L84.8 152.6L90.4 147.2Z" fill="#fff" stroke="#e36c0a" stroke-width="1.3" stroke-linejoin="round"/><path d="M81.8 148.6L84.8 152L88.2 148.8Q85 147.5 81.8 148.6Z" fill="#fde68a"/><path d="M92.6 138.4L88.8 142.2" stroke="#2e2e2e" stroke-width="3.4" stroke-linecap="round"/><path d="M92.6 138.4L88.8 142.2" stroke="#fff" stroke-width="1.2" stroke-linecap="round"/><path d="M85.7 140.9L91.1 146.3" stroke="#2e2e2e" stroke-width="3.6" stroke-linecap="round"/><path d="M85.7 140.9L91.1 146.3" stroke="#fff" stroke-width="1.4" stroke-linecap="round"/></g></svg>
<div class="a" style="left:407px;top:201px;width:46px;height:22px;overflow:hidden"><div class="t" style="left:1.90px;top:4px;font-size:12.50px;color:#242424;transform:scaleX(0.950);">Aptos Narrow</div>
</div><div class="t" style="left:471.60px;top:206px;font-size:12.50px;color:#242424;">11</div>
<div class="t" style="left:410.45px;top:229px;font-size:13.95px;color:#242424;font-weight:700;transform:scaleX(1.059);">Ж</div>
<div class="t" style="left:436.60px;top:229px;font-size:13.95px;color:#3a3a3a;font-style:italic;transform:scaleX(0.974);">К</div>
<div class="a" style="left:400px;top:267px;width:224px;height:385px;border-radius:5px;background:#fff;border:1px solid #707070;box-shadow:0 3px 6px rgba(0,0,0,.16)"></div><div class="a" style="left:406px;top:273px;width:212px;height:24px;background:#fff;border:1px solid #8a8a8a"></div><div class="t" style="left:413.40px;top:277px;font-size:11.63px;color:#6e6e6e;transform:scaleX(0.992);">Поиск в меню</div>
<svg width="994" height="679" style="left:0;top:0"><path d="M434 449.5H622M434 536.5H622" stroke="#d6d6d6"/><path d="M419.5 306L424.8 318M424.5 306L419.2 318" stroke="#3a3a3a"/><g fill="#fff" stroke="#1e88e5" stroke-width="1.4"><circle cx="419" cy="319.6" r="1.6"/><circle cx="425.2" cy="319.6" r="1.6"/></g><path d="M420.5 347.5H414.5V334.5H420.5L422 336" fill="none" stroke="#3a3a3a"/><path d="M420.5 337.5H426L429.5 341V349.5H420.5Z" fill="#fafafa" stroke="#3a3a3a"/><path d="M423 344.5H427M423 346.5H427" stroke="#3a3a3a"/><path d="M422.5 377.5H416.5V364.5H428.5V368" fill="#fbe3a3" stroke="#e36c0a"/><rect x="418" y="366" width="5" height="10" fill="#fafafa"/><path d="M419.5 364.5H421Q421.5 361.8 422.5 361.8Q423.5 361.8 424 364.5H425.5V366.5H419.5Z" fill="#fafafa" stroke="#6a6a6a"/><rect x="422.5" y="368.5" width="7" height="9" fill="#fafafa" stroke="#3a3a3a"/><path d="M441.5 411V394.5H456.5V399" fill="#fbe3a3" stroke="#e36c0a" stroke-width="1.2"/><rect x="443" y="396" width="12.5" height="15" fill="#fafafa"/><path d="M444.5 394H447Q447.5 391 449 391Q450.5 391 451 394H453.5V397.5H444.5Z" fill="#fafafa" stroke="#6a6a6a"/><path d="M444 400.5H454" stroke="#1e7bd0" stroke-width="1.2"/><path d="M444 403.5H451.5M444 406.5H447" stroke="#e0201a" stroke-width="1.2"/><path d="M460.5 399.3L450.5 408.5L452.2 410L461.7 400.5Z" fill="#fff" stroke="#3a3a3a"/><path d="M450 408Q447 408 445.5 410.5Q444.5 412.3 442 412.5Q448 415 451.5 411.5Q452.7 410 452 409.5Z" fill="#83bdec" stroke="#0a64c8" stroke-width="1.1"/><rect x="471.5" y="394.5" width="15" height="18" fill="#fbe3a3" stroke="#e36c0a" stroke-width="1.2"/><rect x="473" y="396" width="12" height="15" fill="#fafafa"/><path d="M474.5 394H477Q477.5 391 479 391Q480.5 391 481 394H483.5V397.5H474.5Z" fill="#fafafa" stroke="#6a6a6a"/><path d="M474 400.5H484M474 403.5H484M474 406.5H484M474 409.5H484" stroke="#1e7bd0" stroke-width="1.2"/><rect x="416.5" y="544.5" width="11" height="14" fill="#fff" stroke="#3a3a3a"/><path d="M419 548.5H420.5M422 548.5H425M419 551.5H420.5M422 551.5H425M419 554.5H420.5" stroke="#6a6a6a"/></svg>
<div class="t" style="left:439.60px;top:309px;font-size:12.50px;color:#242424;transform:scaleX(0.895);">Вырезать</div>
<div class="t" style="left:439.60px;top:337px;font-size:12.50px;color:#242424;transform:scaleX(0.958);">Копировать</div>
<div class="t" style="left:439.60px;top:428px;font-size:12.50px;color:#242424;transform:scaleX(0.917);">Специальная вставка...</div>
<div class="t" style="left:439.60px;top:459px;font-size:12.50px;color:#242424;transform:scaleX(0.894);">Вставить</div>
<div class="t" style="left:439.60px;top:487px;font-size:12.50px;color:#242424;transform:scaleX(0.919);">Удалить</div>
<div class="t" style="left:439.60px;top:515px;font-size:12.50px;color:#242424;transform:scaleX(0.958);">Очистить содержимое</div>
<div class="t" style="left:439.60px;top:546px;font-size:12.50px;color:#242424;transform:scaleX(0.942);">Формат ячеек...</div>
<div class="t" style="left:439.60px;top:574px;font-size:12.50px;color:#242424;transform:scaleX(0.943);">Ширина столбца...</div>
<div class="t" style="left:439.60px;top:602px;font-size:12.50px;color:#242424;transform:scaleX(0.948);">Скрыть</div>
<div class="t" style="left:439.60px;top:630px;font-size:12.50px;color:#242424;transform:scaleX(0.934);">Показать</div>
<div class="t" style="left:441.00px;top:366px;font-size:12.50px;color:#242424;font-weight:700;transform:scaleX(0.915);">Параметры вставки:</div>
<div class="a" style="left:447.1px;top:320.0px;width:8.0px;height:1px;background:#3a3a3a"></div><div class="a" style="left:439.6px;top:348.0px;width:7.0px;height:1px;background:#3a3a3a"></div><div class="a" style="left:514.6px;top:439.0px;width:6.1px;height:1px;background:#3a3a3a"></div><div class="a" style="left:439.6px;top:470.0px;width:7.5px;height:1px;background:#3a3a3a"></div><div class="a" style="left:439.6px;top:498.0px;width:7.3px;height:1px;background:#3a3a3a"></div><div class="a" style="left:527.8px;top:526.0px;width:8.0px;height:1px;background:#3a3a3a"></div><div class="a" style="left:484.7px;top:557.0px;width:6.4px;height:1px;background:#3a3a3a"></div><div class="a" style="left:450.4px;top:585.0px;width:6.6px;height:1px;background:#3a3a3a"></div><div class="a" style="left:439.6px;top:613.0px;width:8.6px;height:1px;background:#3a3a3a"></div><div class="a" style="left:439.6px;top:641.0px;width:8.4px;height:1px;background:#3a3a3a"></div><svg width="994" height="679" style="left:0;top:0"><path d="M399.5 267.5V283.5L403.5 279.8L406.3 285.5L408.7 284.3L406 278.8H411Z" fill="#fff" stroke="#000" stroke-width="1" stroke-linejoin="round"/></svg></body></html>
